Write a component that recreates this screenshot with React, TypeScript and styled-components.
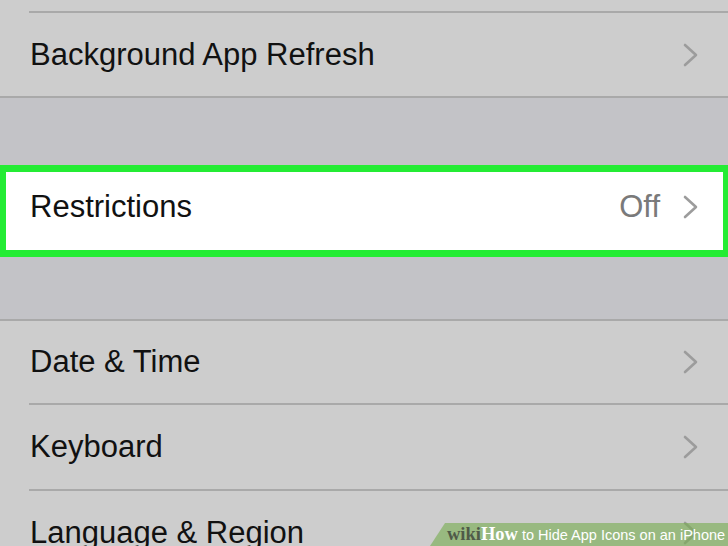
import React from "react";
import styled, { createGlobalStyle } from "styled-components";

const Global = createGlobalStyle`
  html, body { margin: 0; padding: 0; }
  body {
    width: 728px;
    height: 546px;
    overflow: hidden;
    background: #cdcdcd;
    font-family: "Liberation Sans", Arial, sans-serif;
  }
`;

const Screen = styled.div`
  position: relative;
  width: 728px;
  height: 546px;
  overflow: hidden;
  display: flex;
  flex-direction: column;
  background: #cdcdcd;
`;

const Spacer = styled.div<{ $h: number }>`
  height: ${(p) => p.$h}px;
  flex: none;
`;

const Band = styled.div<{ $h: number }>`
  height: ${(p) => p.$h}px;
  flex: none;
  background: #c3c3c7;
`;

const Line = styled.div<{ $inset?: boolean }>`
  flex: none;
  height: 2px;
  margin-left: ${(p) => (p.$inset ? "29px" : "0")};
  background: #a9a9a9;
`;

const Row = styled.div<{ $h: number }>`
  flex: none;
  height: ${(p) => p.$h}px;
  display: flex;
  align-items: center;
  padding: 0 30px 0 30px;
  box-sizing: border-box;
`;

const Label = styled.span`
  flex: 1;
  font-size: 31px;
  color: #111;
  letter-spacing: 0;
`;

const Value = styled.span`
  font-size: 31px;
  color: #7a7a7a;
  margin-right: 23px;
`;

const Highlight = styled.div`
  flex: none;
  height: 92px;
  box-sizing: border-box;
  border-style: solid;
  border-color: #24ec34;
  border-width: 7px 5px 7px 6px;
  background: #ffffff;
  display: flex;
  align-items: center;
  padding: 0 25px 8px 24px;
`;

const ChevronSvg = styled.svg`
  flex: none;
  width: 15px;
  height: 24px;
`;

const Chevron = () => (
  <ChevronSvg viewBox="0 0 15 24">
    <polyline
      points="2,2 13,12 2,22"
      fill="none"
      stroke="#9c9c9c"
      strokeWidth="2.6"
      strokeLinecap="round"
      strokeLinejoin="round"
    />
  </ChevronSvg>
);

const Banner = styled.div`
  position: absolute;
  right: 0;
  bottom: 0;
  width: 298px;
  height: 23px;
  background: rgba(120, 172, 80, 0.62);
  clip-path: polygon(15px 0, 100% 0, 100% 100%, 0 100%);
  display: flex;
  align-items: flex-end;
  padding-left: 17px;
  padding-bottom: 3px;
  box-sizing: border-box;
  white-space: nowrap;
`;

const Wiki = styled.span<{ $light?: boolean }>`
  font-family: "Liberation Serif", "Times New Roman", serif;
  font-weight: bold;
  font-size: 18.5px;
  line-height: 1;
  color: ${(p) => (p.$light ? "#ffffff" : "#4f5a48")};
`;

const Title = styled.span`
  font-family: "Liberation Sans", Arial, sans-serif;
  font-size: 14.5px;
  line-height: 1;
  color: #ffffff;
  margin-left: 4px;
  padding-bottom: 1px;
`;

export default function App() {
  return (
    <>
      <Global />
      <Screen>
        <Spacer $h={11} />
        <Line $inset />
        <Row $h={83}>
          <Label>Background App Refresh</Label>
          <Chevron />
        </Row>
        <Line />
        <Band $h={67} />
        <Highlight>
          <Label>Restrictions</Label>
          <Value>Off</Value>
          <Chevron />
        </Highlight>
        <Band $h={62} />
        <Line />
        <Row $h={82}>
          <Label>Date &amp; Time</Label>
          <Chevron />
        </Row>
        <Line $inset />
        <Row $h={84}>
          <Label>Keyboard</Label>
          <Chevron />
        </Row>
        <Line $inset />
        <Row $h={84}>
          <Label>Language &amp; Region</Label>
          <Chevron />
        </Row>
        <Banner>
          <Wiki>wiki</Wiki>
          <Wiki $light>How</Wiki>
          <Title>to Hide App Icons on an iPhone</Title>
        </Banner>
      </Screen>
    </>
  );
}
